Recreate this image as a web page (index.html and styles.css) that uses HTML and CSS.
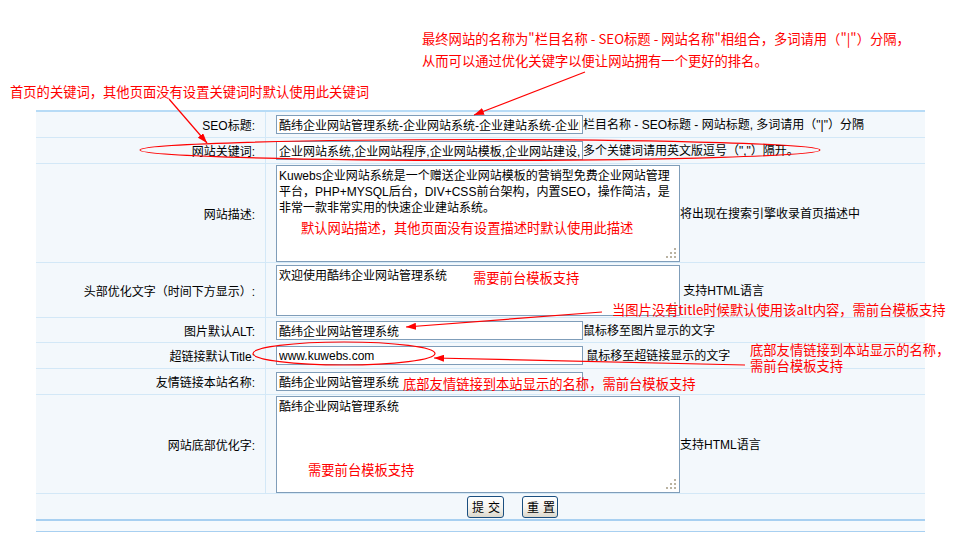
FILE: index.html
```html
<!DOCTYPE html>
<html lang="zh-CN">
<head>
<meta charset="utf-8">
<title>网站基本设置</title>
<link rel="stylesheet" href="styles.css">
</head>
<body>
<div class="page">
  <div class="head-notes">
    <p class="note-title">最终网站的名称为"栏目名称 - SEO标题 - 网站名称"相组合，多词请用（"|"）分隔，<br>从而可以通过优化关键字以便让网站拥有一个更好的排名。</p>
    <p class="note-keys">首页的关键词，其他页面没有设置关键词时默认使用此关键词</p>
  </div>

  <form class="setup" action="#" method="post">
    <table class="grid">
      <tr class="h26">
        <td class="label">SEO标题:</td>
        <td class="value"><input class="text" type="text" value="酷纬企业网站管理系统-企业网站系统-企业建站系统-企业网站模板"><span class="hint">栏目名称 - SEO标题 - 网站标题, 多词请用（"|"）分隔</span></td>
      </tr>
      <tr class="h26">
        <td class="label">网站关键词:</td>
        <td class="value"><input class="text" type="text" value="企业网站系统,企业网站程序,企业网站模板,企业网站建设,企业网站"><span class="hint">多个关键词请用英文版逗号（","）隔开。</span></td>
      </tr>
      <tr class="h99">
        <td class="label">网站描述:</td>
        <td class="value"><span class="area"><textarea class="box tall">Kuwebs企业网站系统是一个赠送企业网站模板的营销型免费企业网站管理平台，PHP+MYSQL后台，DIV+CSS前台架构，内置SEO，操作简洁，是非常一款非常实用的快速企业建站系统。</textarea></span><span class="hint">将出现在搜索引擎收录首页描述中</span></td>
      </tr>
      <tr class="h55">
        <td class="label">头部优化文字（时间下方显示）:</td>
        <td class="value"><span class="area"><textarea class="box short">欢迎使用酷纬企业网站管理系统</textarea></span> <span class="hint">支持HTML语言</span></td>
      </tr>
      <tr class="h25">
        <td class="label">图片默认ALT:</td>
        <td class="value"><input class="text" type="text" value="酷纬企业网站管理系统"><span class="hint">鼠标移至图片显示的文字</span></td>
      </tr>
      <tr class="h26">
        <td class="label">超链接默认Title:</td>
        <td class="value"><input class="text" type="text" value="www.kuwebs.com"> <span class="hint">鼠标移至超链接显示的文字</span></td>
      </tr>
      <tr class="h26">
        <td class="label">友情链接本站名称:</td>
        <td class="value"><input class="text" type="text" value="酷纬企业网站管理系统"></td>
      </tr>
      <tr class="h99">
        <td class="label">网站底部优化字:</td>
        <td class="value"><span class="area"><textarea class="box tall">酷纬企业网站管理系统</textarea></span><span class="hint">支持HTML语言</span></td>
      </tr>
      <tr class="actions">
        <td colspan="2"><button class="btn" type="submit">提交</button><button class="btn" type="reset">重置</button></td>
      </tr>
      <tr class="foot">
        <td colspan="2"></td>
      </tr>
    </table>
  </form>

  <div class="callouts">
    <span class="tip tip-desc">默认网站描述，其他页面没有设置描述时默认使用此描述</span>
    <span class="tip tip-head">需要前台模板支持</span>
    <span class="tip tip-alt">当图片没有title时候默认使用该alt内容，需前台模板支持</span>
    <span class="tip tip-link">底部友情链接到本站显示的名称，需前台模板支持</span>
    <span class="tip tip-side">底部友情链接到本站显示的名称，<br>需前台模板支持</span>
    <span class="tip tip-foot">需要前台模板支持</span>
  </div>

  <svg class="marks" width="960" height="547" viewBox="0 0 960 547">
    <defs>
      <marker id="head" viewBox="0 0 10 7" refX="10" refY="3.5" markerWidth="10" markerHeight="7" orient="auto" markerUnits="userSpaceOnUse">
        <path d="M0 0L10 3.5L0 7z" fill="#f00"/>
      </marker>
    </defs>
    <line x1="585" y1="72" x2="474" y2="115" marker-end="url(#head)"/>
    <line x1="169" y1="99" x2="207" y2="143" marker-end="url(#head)"/>
    <line x1="602" y1="312" x2="406" y2="327" marker-end="url(#head)"/>
    <line x1="745" y1="365" x2="434" y2="358" marker-end="url(#head)"/>
    <ellipse cx="480" cy="150" rx="340" ry="10.5"/>
    <ellipse cx="344" cy="353.5" rx="91" ry="11.5"/>
  </svg>
</div>
</body>
</html>
```

FILE: styles.css
```css
* {
  box-sizing: border-box;
}

html, body {
  margin: 0;
  padding: 0;
  background: #fff;
}

body {
  font-family: "Liberation Sans", "Noto Sans CJK SC", sans-serif;
  font-size: 12px;
  color: #000;
}

.page {
  position: relative;
  width: 960px;
  height: 547px;
  overflow: hidden;
}

/* red notes above the form */
.head-notes {
  height: 110px;
  color: #f00;
  font-family: "Noto Sans CJK SC", sans-serif;
  font-size: 13.3px;
}

.note-title {
  margin: 0;
  padding: 28px 0 0 422px;
  line-height: 22px;
  white-space: nowrap;
}

.note-keys {
  margin: 12px 0 0;
  padding-left: 10px;
  line-height: 16px;
}

.setup {
  margin: 0;
}

/* settings table */
.grid {
  margin-left: 36px;
  width: 889px;
  border-collapse: separate;
  border-spacing: 0;
  border-top: 2px solid #b7dbf6;
  background: #f3f8fc;
}

.grid td {
  padding: 0;
  border-bottom: 1px solid #d3e8f7;
  vertical-align: middle;
}

.h25 td { height: 25px; }
.h26 td { height: 26px; }
.h55 td { height: 55px; }
.h99 td { height: 99px; }

.label {
  width: 230px;
  padding-right: 10px !important;
  border-right: 1px solid #d3e8f7;
  text-align: right;
  white-space: nowrap;
}

.value {
  padding-left: 10px !important;
  white-space: nowrap;
  line-height: 16px;
}

.text {
  width: 307px;
  height: 19px;
  margin: 0;
  padding: 0 2px;
  border: 1px solid #7f9db9;
  background: #fff;
  font: 12px "Liberation Sans", "Noto Sans CJK SC", sans-serif;
  color: #000;
  vertical-align: middle;
  outline: none;
}

.hint {
  vertical-align: middle;
}

.area {
  position: relative;
  display: inline-block;
  vertical-align: middle;
}

.box {
  display: block;
  width: 404px;
  margin: 0;
  padding: 2px;
  border: 1px solid #7f9db9;
  background: #fff;
  font: 12px/16px "Liberation Sans", "Noto Sans CJK SC", sans-serif;
  color: #000;
  resize: none;
  overflow: hidden;
  white-space: pre-wrap;
  outline: none;
}

.tall { height: 97px; }
.short { height: 51px; }

/* dotted resize grip in the corner of each text area */
.area::after {
  content: "";
  position: absolute;
  right: 4px;
  bottom: 4px;
  width: 2px;
  height: 2px;
  background: #bab3a1;
  box-shadow: -4px 0 #bab3a1, -8px 0 #bab3a1, 0 -4px #bab3a1, -4px -4px #bab3a1, 0 -8px #bab3a1;
}

.actions td {
  height: 27px;
  padding-left: 431px;
  border-bottom: 2px solid #a8d0f1;
}

.btn {
  width: 37px;
  height: 22px;
  margin: 0 18px 0 0;
  padding: 0 0 0 4px;
  border: 1px solid #1b4f80;
  border-radius: 3px;
  background: linear-gradient(#ffffff, #f4f3ee 55%, #dcd8cc);
  font: 12px "Noto Sans CJK SC", sans-serif;
  letter-spacing: 4px;
  white-space: nowrap;
  overflow: visible;
  text-align: left;
  color: #000;
  vertical-align: middle;
  cursor: pointer;
}

.btn + .btn {
  width: 36px;
}

.foot td {
  height: 11px;
  background: #f6fafd;
  border-bottom: 1px solid #a8d0f1;
}

/* red call-outs laid over the form */
.callouts {
  position: absolute;
  left: 0;
  top: 0;
  width: 960px;
  height: 547px;
  pointer-events: none;
  color: #f00;
  font-family: "Noto Sans CJK SC", sans-serif;
  font-size: 13.3px;
  line-height: 16px;
}

.tip {
  position: absolute;
  white-space: nowrap;
}

.tip-desc { left: 301px; top: 220px; }
.tip-head { left: 473px; top: 270px; }
.tip-alt  { left: 612px; top: 302px; }
.tip-link { left: 403px; top: 376px; }
.tip-side { left: 750px; top: 342px; }
.tip-foot { left: 308px; top: 462px; }

.marks {
  position: absolute;
  left: 0;
  top: 0;
  pointer-events: none;
}

.marks line,
.marks ellipse {
  fill: none;
  stroke: #f00;
  stroke-width: 1.2;
}
```
